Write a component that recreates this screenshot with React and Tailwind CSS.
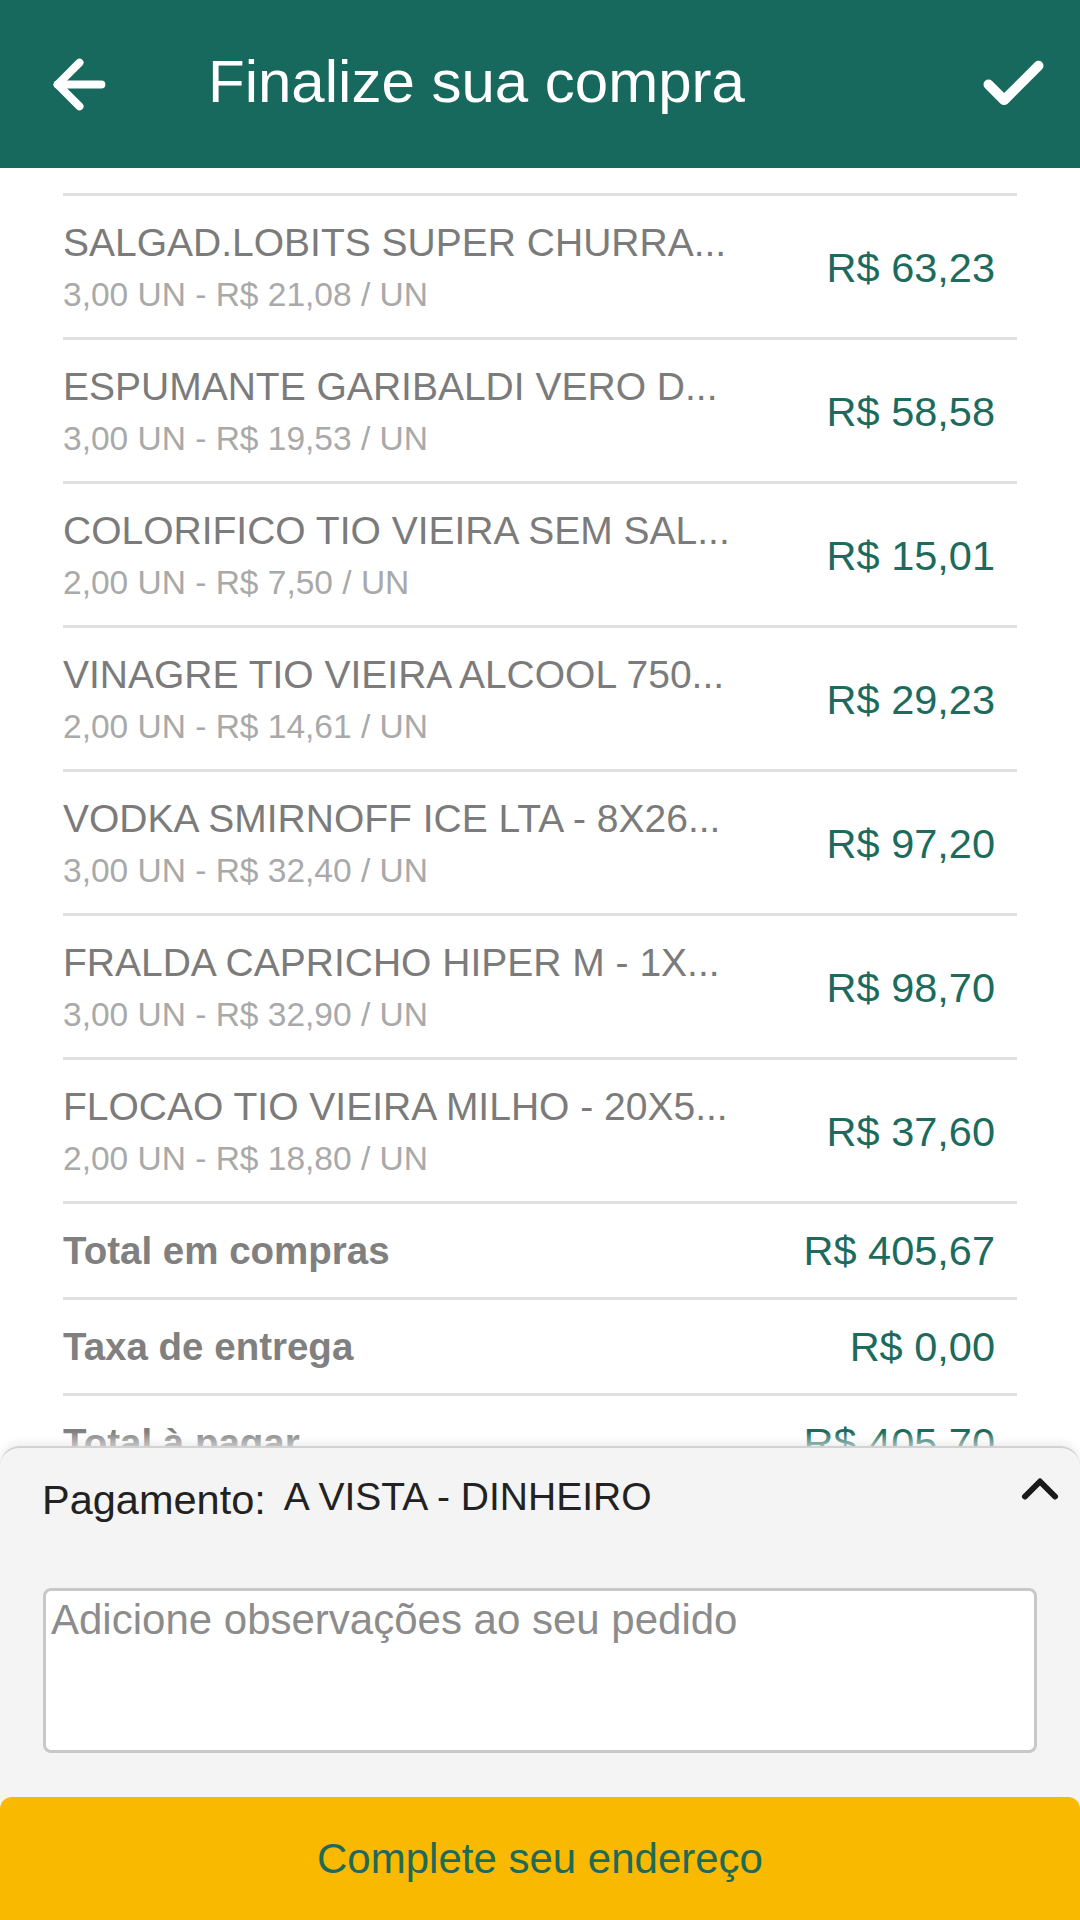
import { ArrowLeft, Check, ChevronUp } from "lucide-react";

const items = [
  { name: "SALGAD.LOBITS SUPER CHURRA...", detail: "3,00 UN - R$ 21,08 / UN", price: "R$ 63,23" },
  { name: "ESPUMANTE GARIBALDI VERO D...", detail: "3,00 UN - R$ 19,53 / UN", price: "R$ 58,58" },
  { name: "COLORIFICO TIO VIEIRA SEM SAL...", detail: "2,00 UN - R$ 7,50 / UN", price: "R$ 15,01" },
  { name: "VINAGRE TIO VIEIRA ALCOOL 750...", detail: "2,00 UN - R$ 14,61 / UN", price: "R$ 29,23" },
  { name: "VODKA SMIRNOFF ICE LTA - 8X26...", detail: "3,00 UN - R$ 32,40 / UN", price: "R$ 97,20" },
  { name: "FRALDA CAPRICHO HIPER M - 1X...", detail: "3,00 UN - R$ 32,90 / UN", price: "R$ 98,70" },
  { name: "FLOCAO TIO VIEIRA MILHO - 20X5...", detail: "2,00 UN - R$ 18,80 / UN", price: "R$ 37,60" },
];

const totals = [
  { label: "Total em compras", value: "R$ 405,67" },
  { label: "Taxa de entrega", value: "R$ 0,00" },
  { label: "Total à pagar", value: "R$ 405,70" },
];

export default function App() {
  return (
    <div className="relative h-[1920px] w-[1080px] overflow-hidden bg-white font-['Liberation_Sans',Arial,sans-serif]">
      <header className="flex h-[168px] items-center bg-[#18695d] pl-[42px] pr-[29px] text-white">
        <ArrowLeft size={75} strokeWidth={2.55} />
        <h1 className="ml-[91px] flex-1 pb-[6px] text-[60px] font-normal leading-[69px]">
          Finalize sua compra
        </h1>
        <Check size={75} strokeWidth={3.2} />
      </header>

      <div className="mx-[63px] mt-[25px] border-t-[3px] border-[#e0e0e0]">
        {items.map((it) => (
          <div
            key={it.name}
            className="flex h-[144px] items-center justify-between border-b-[3px] border-[#e0e0e0] pr-[22px]"
          >
            <div className="pt-[3px]">
              <div className="whitespace-nowrap text-[39px] leading-[41px] text-[#7b7b7b]">{it.name}</div>
              <div className="mt-[13px] whitespace-nowrap text-[33.5px] leading-[38px] text-[#a9a9a9]">
                {it.detail}
              </div>
            </div>
            <div className="whitespace-nowrap pt-[3px] text-[41.5px] leading-[42px] text-[#1c6b5d]">{it.price}</div>
          </div>
        ))}
        {totals.map((t) => (
          <div
            key={t.label}
            className="flex h-[96px] items-center justify-between border-b-[3px] border-[#e0e0e0] pr-[22px]"
          >
            <div className="text-[38.5px] font-bold leading-[42px] text-[#808080]">{t.label}</div>
            <div className="text-[41.5px] leading-[42px] text-[#1c6b5d]">{t.value}</div>
          </div>
        ))}
      </div>

      <div className="absolute inset-x-0 bottom-0">
        <div className="pointer-events-none h-[14px] bg-linear-to-b from-white/0 to-white/60" />
        <div className="rounded-t-[20px] border-t-2 border-[#d2d2d2] bg-[#f4f4f4] shadow-[0_-3px_8px_rgba(0,0,0,0.08)]">
          <div className="flex items-start justify-between pl-[42px] pr-[10px] pt-[27px]">
            <div className="flex text-[#222222]">
              <span className="pt-[3px] text-[41.5px] leading-[44px]">Pagamento:</span>
              <span className="ml-[18px] text-[39px] leading-[44px]">A VISTA - DINHEIRO</span>
            </div>
            <ChevronUp size={60} strokeWidth={2.4} className="-mt-[16px] text-[#1a1a1a]" />
          </div>
          <div className="mt-[66px] px-[43px]">
            <textarea
              placeholder="Adicione observações ao seu pedido"
              className="block h-[165px] w-full resize-none rounded-[8px] border-[3px] border-[#c8c8c8] bg-white px-[5px] pt-[5px] text-[42px] leading-[47px] text-[#222222] outline-none placeholder:text-[#8c8c8c]"
            />
          </div>
          <button className="mt-[44px] flex h-[123px] w-full items-center justify-center rounded-t-[12px] bg-[#f8b900] text-[42px] text-[#1e6a57]">
            Complete seu endereço
          </button>
        </div>
      </div>
    </div>
  );
}
